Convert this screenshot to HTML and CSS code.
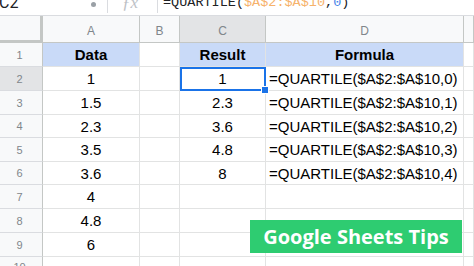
FILE: index.html
```html
<!DOCTYPE html>
<html lang="en">

<head>
    <meta charset="UTF-8">
    <meta name="viewport" content="width=device-width, initial-scale=1.0">
    <title>QUARTILE - Google Sheets Tips</title>
    <link rel="stylesheet" href="styles.css">
</head>

<body>
    <!-- formula bar, cut off at the top -->
    <div class="formula-bar">
        <span class="name-box">C2</span>
        <span class="name-arrow"></span>
        <span class="bar-sep"></span>
        <span class="fx">&fnof;x</span>
        <span class="bar-sep"></span>
        <span class="formula-text">=QUARTILE(<span class="ref">$A$2:$A$10</span>,<span class="num">0</span>)</span>
    </div>

    <div class="sheet">
        <div class="corner"></div>
        <div class="col-head">A</div>
        <div class="col-head">B</div>
        <div class="col-head active">C</div>
        <div class="col-head">D</div>
        <div class="col-head"></div>

        <div class="row-head">1</div>
        <div class="cell head-fill">Data</div>
        <div class="cell"></div>
        <div class="cell head-fill">Result</div>
        <div class="cell head-fill">Formula</div>
        <div class="cell"></div>

        <div class="row-head active">2</div>
        <div class="cell center">1</div>
        <div class="cell"></div>
        <div class="cell center selected">1<span class="handle"></span></div>
        <div class="cell">=QUARTILE($A$2:$A$10,0)</div>
        <div class="cell"></div>

        <div class="row-head">3</div>
        <div class="cell center">1.5</div>
        <div class="cell"></div>
        <div class="cell center">2.3</div>
        <div class="cell">=QUARTILE($A$2:$A$10,1)</div>
        <div class="cell"></div>

        <div class="row-head">4</div>
        <div class="cell center">2.3</div>
        <div class="cell"></div>
        <div class="cell center">3.6</div>
        <div class="cell">=QUARTILE($A$2:$A$10,2)</div>
        <div class="cell"></div>

        <div class="row-head">5</div>
        <div class="cell center">3.5</div>
        <div class="cell"></div>
        <div class="cell center">4.8</div>
        <div class="cell">=QUARTILE($A$2:$A$10,3)</div>
        <div class="cell"></div>

        <div class="row-head">6</div>
        <div class="cell center">3.6</div>
        <div class="cell"></div>
        <div class="cell center">8</div>
        <div class="cell">=QUARTILE($A$2:$A$10,4)</div>
        <div class="cell"></div>

        <div class="row-head">7</div>
        <div class="cell center">4</div>
        <div class="cell"></div>
        <div class="cell"></div>
        <div class="cell"></div>
        <div class="cell"></div>

        <div class="row-head">8</div>
        <div class="cell center">4.8</div>
        <div class="cell"></div>
        <div class="cell"></div>
        <div class="cell"></div>
        <div class="cell"></div>

        <div class="row-head">9</div>
        <div class="cell center">6</div>
        <div class="cell"></div>
        <div class="cell"></div>
        <div class="cell"></div>
        <div class="cell"></div>

        <div class="row-head">10</div>
        <div class="cell"></div>
        <div class="cell"></div>
        <div class="cell"></div>
        <div class="cell"></div>
        <div class="cell"></div>
    </div>

    <!-- green label over the grid -->
    <div class="tips-badge">Google Sheets Tips</div>
</body>

</html>
```

FILE: styles.css
```css
body {
    margin: 0;
    width: 474px;
    height: 266px;
    overflow: hidden;
    background-color: #fff;
    font-family: "Liberation Sans", Arial, sans-serif;
    position: relative;
}

/* formula bar */
.formula-bar {
    height: 15px;
    border-bottom: 1px solid #dadce0;
    display: flex;
    align-items: flex-start;
    overflow: hidden;
    color: #202124;
}

.name-box {
    width: 92px;
    margin-left: -1px;
    margin-top: -5px;
    font-size: 16px;
    line-height: 16px;
    font-family: Roboto, "Liberation Sans", sans-serif;
}

.name-arrow {
    width: 5px;
    height: 5px;
    margin-top: 2px;
    background-color: #9aa0a6;
    border-radius: 50%;
}

.bar-sep {
    width: 1px;
    height: 13px;
    margin-left: 11px;
    background-color: #dadce0;
}

.fx {
    width: 24px;
    margin-left: 14px;
    margin-top: -5px;
    font-family: "Liberation Serif", serif;
    font-style: italic;
    font-size: 17px;
    line-height: 16px;
    color: #bdc1c6;
}

.formula-text {
    margin-left: 5px;
    margin-top: -5px;
    font-family: "Liberation Mono", monospace;
    font-size: 13.5px;
    line-height: 16px;
}

.ref {
    color: #f6b26b;
}

.num {
    color: #4a86e8;
}

/* the grid */
.sheet {
    display: grid;
    grid-template-columns: 43px 97px 40px 86px 198px 10px;
    grid-template-rows: 27px 24px 24px 24px 23px 24px 23px 24px 24px 24px 20px;
    font-size: 15px;
    color: #000;
}

.sheet > div {
    box-sizing: border-box;
    display: flex;
    align-items: center;
    border-right: 1px solid #e2e3e3;
    border-bottom: 1px solid #e2e3e3;
    white-space: nowrap;
    overflow: hidden;
}

.corner {
    background-color: #f8f9fa;
    border-right: 3px solid #c4c7c5 !important;
    border-bottom: 3px solid #c4c7c5 !important;
}

.col-head {
    justify-content: center;
    padding-top: 3px;
    background-color: #f8f9fa;
    color: #80868b;
    font-size: 12px;
    border-right-color: #c4c7c5 !important;
    border-bottom-color: #c4c7c5 !important;
}

.row-head {
    justify-content: center;
    padding-right: 3px;
    background-color: #f8f9fa;
    color: #80868b;
    font-size: 11px;
    border-right-color: #c4c7c5 !important;
    border-bottom-color: #dadce0 !important;
}

.col-head.active,
.row-head.active {
    background-color: #e3e4e6;
}

.cell {
    padding: 0 3px;
}

.center {
    justify-content: center;
}

.head-fill {
    justify-content: center;
    background-color: #c9daf8;
    font-weight: bold;
}

.selected {
    position: relative;
    overflow: visible !important;
    outline: 2px solid #1a73e8;
    outline-offset: -2px;
}

.handle {
    position: absolute;
    right: -4px;
    bottom: -4px;
    width: 6px;
    height: 6px;
    background-color: #1a73e8;
    border: 1px solid #fff;
    z-index: 2;
}

/* green label */
.tips-badge {
    position: absolute;
    left: 250px;
    top: 220px;
    width: 212px;
    height: 33px;
    box-sizing: border-box;
    display: flex;
    align-items: center;
    justify-content: center;
    background-color: #2ecc71;
    color: #fff;
    font-family: "Open Sans", sans-serif;
    font-weight: bold;
    font-size: 20px;
    z-index: 3;
}
```
